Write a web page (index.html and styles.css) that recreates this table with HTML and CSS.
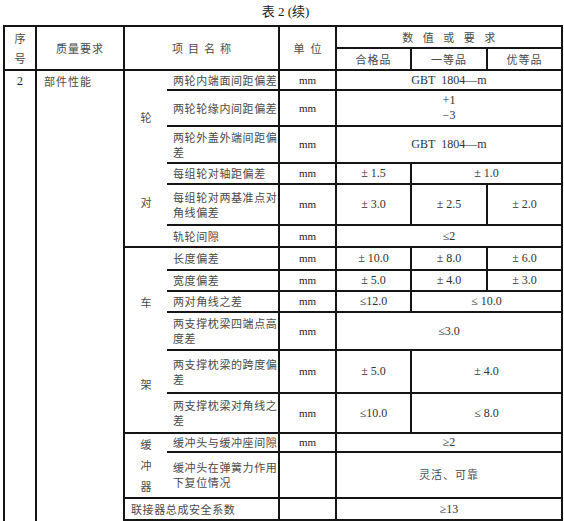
FILE: index.html
```html
<!DOCTYPE html>
<html lang="zh">
<head>
<meta charset="utf-8">
<link rel="stylesheet" href="styles.css">
</head>
<body>
<div class="page">
  <div class="title">表 2 <span class="paren">(续)</span></div>
  <table class="spec">
    <colgroup>
      <col class="c-no"><col class="c-req"><col class="c-grp"><col class="c-item"><col class="c-unit"><col class="c-v1"><col class="c-v2"><col class="c-v3">
    </colgroup>
    <tr class="h1">
      <td rowspan="2" class="hd no-head"><div>序</div><div>号</div></td>
      <td rowspan="2" class="hd req-head">质量要求</td>
      <td rowspan="2" colspan="2" class="hd item-head">项目名称</td>
      <td rowspan="2" class="hd unit-head">单位</td>
      <td colspan="3" class="hd val-head">数值或要求</td>
    </tr>
    <tr class="h2">
      <td class="hd grade">合格品</td>
      <td class="hd grade">一等品</td>
      <td class="hd grade">优等品</td>
    </tr>
    <tr class="r1">
      <td rowspan="16" class="num">2</td>
      <td rowspan="16" class="req">部件性能</td>
      <td rowspan="6" class="grp g-wheel"><div class="gc">轮</div><div class="gc">对</div></td>
      <td class="item">两轮内端面间距偏差</td>
      <td class="unit">mm</td>
      <td colspan="3" class="val">GBT&nbsp; 1804—m</td>
    </tr>
    <tr class="r2">
      <td class="item">两轮轮缘内间距偏差</td>
      <td class="unit">mm</td>
      <td colspan="3" class="val stack"><div>+1</div><div>−3</div></td>
    </tr>
    <tr class="r3">
      <td class="item">两轮外盖外端间距偏差</td>
      <td class="unit">mm</td>
      <td colspan="3" class="val">GBT&nbsp; 1804—m</td>
    </tr>
    <tr class="r4">
      <td class="item">每组轮对轴距偏差</td>
      <td class="unit">mm</td>
      <td class="val">± 1.5</td>
      <td colspan="2" class="val">± 1.0</td>
    </tr>
    <tr class="r5">
      <td class="item">每组轮对两基准点对角线偏差</td>
      <td class="unit">mm</td>
      <td class="val">± 3.0</td>
      <td class="val">± 2.5</td>
      <td class="val">± 2.0</td>
    </tr>
    <tr class="r6">
      <td class="item">轨轮间隙</td>
      <td class="unit">mm</td>
      <td colspan="3" class="val">≤2</td>
    </tr>
    <tr class="r7">
      <td rowspan="6" class="grp g-frame"><div class="gc">车</div><div class="gc">架</div></td>
      <td class="item">长度偏差</td>
      <td class="unit">mm</td>
      <td class="val">± 10.0</td>
      <td class="val">± 8.0</td>
      <td class="val">± 6.0</td>
    </tr>
    <tr class="r8">
      <td class="item">宽度偏差</td>
      <td class="unit">mm</td>
      <td class="val">± 5.0</td>
      <td class="val">± 4.0</td>
      <td class="val">± 3.0</td>
    </tr>
    <tr class="r9">
      <td class="item">两对角线之差</td>
      <td class="unit">mm</td>
      <td class="val">≤12.0</td>
      <td colspan="2" class="val">≤ 10.0</td>
    </tr>
    <tr class="r10">
      <td class="item">两支撑枕梁四端点高度差</td>
      <td class="unit">mm</td>
      <td colspan="3" class="val">≤3.0</td>
    </tr>
    <tr class="r11">
      <td class="item">两支撑枕梁的跨度偏差</td>
      <td class="unit">mm</td>
      <td class="val">± 5.0</td>
      <td colspan="2" class="val">± 4.0</td>
    </tr>
    <tr class="r12">
      <td class="item">两支撑枕梁对角线之差</td>
      <td class="unit">mm</td>
      <td class="val">≤10.0</td>
      <td colspan="2" class="val">≤ 8.0</td>
    </tr>
    <tr class="r13">
      <td rowspan="2" class="grp g-buf"><div class="gc">缓</div><div class="gc">冲</div><div class="gc">器</div></td>
      <td class="item">缓冲头与缓冲座间隙</td>
      <td class="unit">mm</td>
      <td colspan="3" class="val">≥2</td>
    </tr>
    <tr class="r14">
      <td class="item">缓冲头在弹簧力作用下复位情况</td>
      <td class="unit"></td>
      <td colspan="3" class="val cjk">灵活、可靠</td>
    </tr>
    <tr class="r15">
      <td colspan="2" class="item wide">联接器总成安全系数</td>
      <td class="unit"></td>
      <td colspan="3" class="val">≥13</td>
    </tr>
    <tr class="r16">
      <td colspan="2" class="item wide"></td>
      <td class="unit"></td>
      <td class="val"></td>
      <td class="val"></td>
      <td class="val"></td>
    </tr>
  </table>
</div>
</body>
</html>
```

FILE: styles.css
```css
html, body {
  margin: 0;
  padding: 0;
  background: #fff;
}

.page {
  width: 564px;
  height: 521px;
  overflow: hidden;
  padding: 0 0 0 3px;
  box-sizing: border-box;
}

.title {
  height: 25px;
  line-height: 23px;
  text-align: center;
  font-family: "Liberation Serif", "Noto Sans CJK SC", serif;
  font-size: 13px;
  color: #222;
  padding-left: 4px;
}

.spec {
  border-collapse: collapse;
  table-layout: fixed;
  width: 558px;
  font-family: "Noto Sans CJK SC", sans-serif;
  font-size: 11px;
  color: #4a4a4a;
}

.spec td {
  border: 2px solid #151515;
  padding: 0;
  vertical-align: middle;
  line-height: 15px;
}

.c-no { width: 32px; }
.c-req { width: 88px; }
.c-grp { width: 43px; }
.c-item { width: 112px; }
.c-unit { width: 57px; }
.c-v1 { width: 75px; }
.c-v2 { width: 76px; }
.c-v3 { width: 75px; }

.h1 { height: 22px; }
.h2 { height: 22px; }

.spec td.hd {
  text-align: center;
}

.spec td.no-head div {
  line-height: 20px;
}

.spec td.req-head {
  letter-spacing: 1px;
}

.spec td.item-head {
  letter-spacing: 5px;
  padding-left: 5px;
}

.spec td.unit-head {
  letter-spacing: 6px;
  padding-left: 6px;
}

.spec td.val-head {
  letter-spacing: 9.5px;
  padding-left: 9px;
}

.spec td.grade {
  letter-spacing: 1px;
}

.spec td.num {
  vertical-align: top;
  text-align: center;
  font-family: "Liberation Serif", serif;
  font-size: 12px;
  color: #222;
  padding-top: 3px;
}

.spec td.req {
  vertical-align: top;
  padding: 3px 0 0 7px;
  letter-spacing: 1px;
}

.spec td.grp {
  border-right-style: hidden;
  text-align: center;
  vertical-align: top;
}

.spec td.g-wheel { padding-top: 39px; }
.spec td.g-wheel .gc + .gc { margin-top: 70px; }

.spec td.g-frame { padding-top: 47px; }
.spec td.g-frame .gc + .gc { margin-top: 67px; }

.spec td.g-buf { vertical-align: middle; }
.spec td.g-buf .gc { line-height: 21px; }

.spec td.item {
  border-left-style: hidden;
  padding: 0 0 0 6px;
  letter-spacing: 0.6px;
}

.spec td.item.wide {
  border-left: 2px solid #151515;
  padding-left: 6px;
}

.spec td.unit {
  text-align: center;
  font-family: "Liberation Serif", serif;
  font-size: 11px;
  color: #222;
}

.spec td.val {
  text-align: center;
  font-family: "Liberation Serif", serif;
  font-size: 12px;
  color: #333;
}

.spec td.val.cjk {
  font-family: "Noto Sans CJK SC", sans-serif;
  font-size: 11px;
  letter-spacing: 1px;
  color: #4a4a4a;
}

.r1 { height: 20px; }
.r2 { height: 36px; }
.r3 { height: 37px; }
.r4 { height: 21px; }
.r5 { height: 41px; }
.r6 { height: 22px; }
.r7 { height: 23px; }
.r8 { height: 21px; }
.r9 { height: 21px; }
.r10 { height: 38px; }
.r11 { height: 43px; }
.r12 { height: 40px; }
.r13 { height: 18px; }
.r14 { height: 45px; }
.r15 { height: 22px; }
.r16 { height: 22px; }
```
